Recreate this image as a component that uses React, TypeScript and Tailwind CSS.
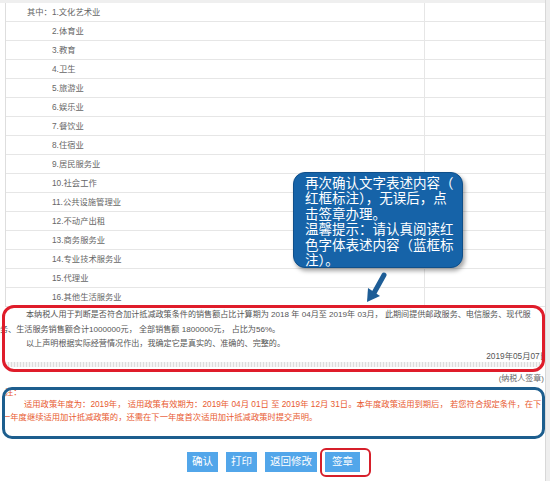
import React from 'react';

const items = [
  '2.体育业',
  '3.教育',
  '4.卫生',
  '5.旅游业',
  '6.娱乐业',
  '7.餐饮业',
  '8.住宿业',
  '9.居民服务业',
  '10.社会工作',
  '11.公共设施管理业',
  '12.不动产出租',
  '13.商务服务业',
  '14.专业技术服务业',
  '15.代理业',
  '16.其他生活服务业',
];

function Row({ children, first }: { children: React.ReactNode; first?: boolean }) {
  return (
    <div className="grid grid-cols-[419px_120px] h-[19px] border-b border-[#e6e6e6]">
      <div className={`flex items-center text-[8.3px] text-[#666] border-r border-[#e6e6e6] ${first ? 'pl-[21px]' : 'pl-[46px]'}`}>
        {children}
      </div>
      <div />
    </div>
  );
}

export default function App() {
  return (
    <div className="relative w-[550px] h-[481px] overflow-hidden bg-white font-['Liberation_Sans','Noto_Sans_CJK_SC',sans-serif]">
      <div className="flex h-full">
        <div className="w-[545px] shrink-0 flex flex-col">
          <div className="h-[3px] bg-[#efefef]" />

          {/* 行业列表 */}
          <div className="ml-[5px] border-l border-[#dedede]">
            <Row first>其中：1.文化艺术业</Row>
            {items.map((item) => (
              <Row key={item}>{item}</Row>
            ))}
          </div>

          {/* 声明内容 */}
          <div className="pt-[1px] text-[8.1px] leading-[14.5px] text-[#555] whitespace-nowrap">
            <div className="pl-[26px]">本纳税人用于判断是否符合加计抵减政策条件的销售额占比计算期为 2018 年 04月至 2019年 03月， 此期间提供邮政服务、电信服务、现代服</div>
            <div>务、生活服务销售额合计1000000元， 全部销售额 1800000元， 占比为56%。</div>
            <div className="pl-[26px]">以上声明根据实际经营情况作出，我确定它是真实的、准确的、完整的。</div>
          </div>
          <div className="flex justify-end mt-[-1px] -mr-[3px] text-[8.3px] leading-[11px] text-[#555] whitespace-nowrap">2019年05月07日</div>
          <div className="mx-[5px] h-[5px] bg-[repeating-linear-gradient(90deg,#dcdcdc_0_1px,#f4f4f4_1px_3px)]" />
          <div className="flex justify-end mt-[6px] pr-[1px] text-[8px] leading-[11px] text-[#666]">(纳税人签章)</div>

          {/* 注 */}
          <div className="mt-[2px] text-[8.3px] leading-[12.5px] text-[#e85a30] whitespace-nowrap">
            <div className="pl-[5px]">注：</div>
            <div className="pl-[24px]">适用政策年度为：2019年， 适用政策有效期为：2019年 04月 01日 至 2019年 12月 31日。本年度政策适用到期后， 若您符合规定条件，在下</div>
            <div className="pl-[2px]">一年度继续适用加计抵减政策的，还需在下一年度首次适用加计抵减政策时提交声明。</div>
          </div>

          {/* 按钮 */}
          <div className="mt-[29px] flex justify-center gap-[8px] pl-[2px]">
            <button className="h-[20px] w-[31px] bg-[#52a6ea] text-white text-[10.5px]">确认</button>
            <button className="h-[20px] w-[31px] bg-[#52a6ea] text-white text-[10.5px]">打印</button>
            <button className="h-[20px] w-[52px] bg-[#52a6ea] text-white text-[10.5px]">返回修改</button>
            <button className="h-[20px] w-[35px] bg-[#52a6ea] text-white text-[10.5px]">签章</button>
          </div>
        </div>
        <div className="flex-1 border-l border-[#d8d8d8] bg-[#eeeeee]" />
      </div>

      {/* 标注 */}
      <div className="absolute left-[2px] top-[305px] w-[543px] h-[67px] rounded-[12px] border-[3px] border-[#df1c2a]" />
      <div className="absolute left-[2px] top-[387px] w-[543px] h-[52px] rounded-[10px] border-[3px] border-[#1d5e8e]" />
      <div className="absolute left-[320px] top-[448px] w-[51px] h-[29px] rounded-[6px] border-[2.5px] border-[#d61f2a]" />

      <div className="absolute left-[293px] top-[172px] w-[170px] h-[96px] rounded-[12px] bg-[#1663a8] border border-[#0f4f8a] shadow-[2px_3px_4px_rgba(0,0,0,0.35)] pl-[11px] pt-[3px] text-[13.5px] leading-[15.4px] text-white whitespace-nowrap">
        <div>再次确认文字表述内容（</div>
        <div>红框标注），无误后，点</div>
        <div>击签章办理。</div>
        <div>温馨提示：请认真阅读红</div>
        <div>色字体表述内容（蓝框标</div>
        <div>注）。</div>
      </div>

      <svg className="absolute left-[364px] top-[272px]" width="26" height="32" viewBox="0 0 26 32">
        <line x1="20" y1="3" x2="10" y2="21" stroke="#1e5d96" strokeWidth="5" strokeLinecap="round" />
        <polygon points="3,30 4,16 16,24" fill="#1e5d96" />
      </svg>
    </div>
  );
}
